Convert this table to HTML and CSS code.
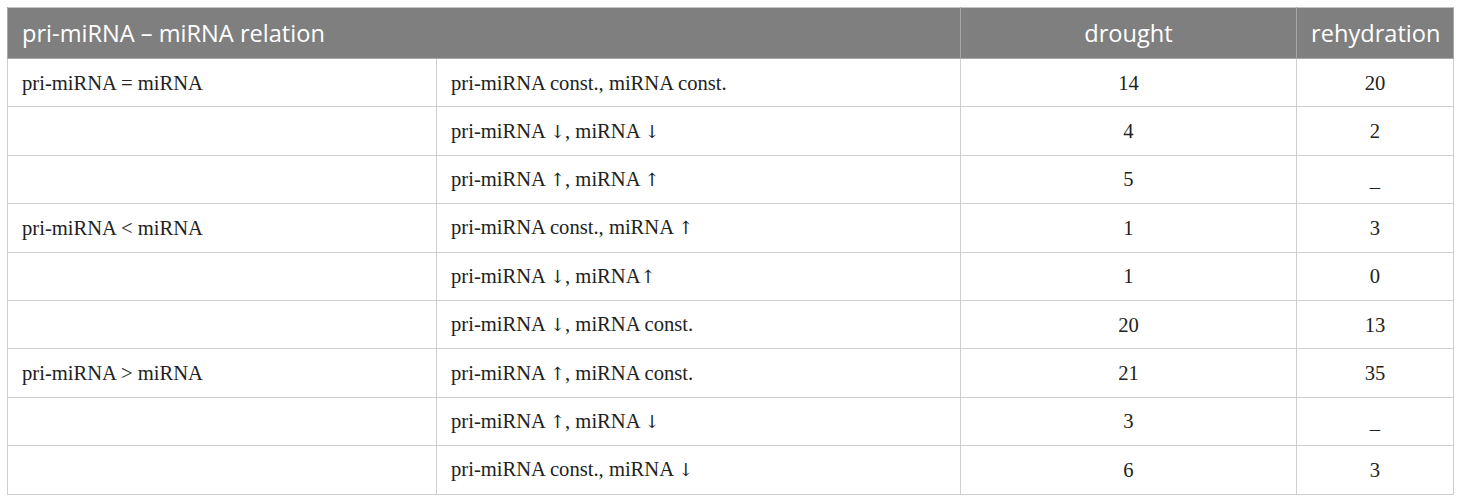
FILE: index.html
```html
<!DOCTYPE html>
<html>
<head>
<meta charset="utf-8">
<link rel="stylesheet" href="styles.css">
</head>
<body>
<div class="wrap">
<table class="data">
  <colgroup>
    <col class="c1"><col class="c2"><col class="c3"><col class="c4">
  </colgroup>
  <thead>
    <tr>
      <th colspan="2" class="left">pri-miRNA – miRNA relation</th>
      <th>drought</th>
      <th>rehydration</th>
    </tr>
  </thead>
  <tbody>
    <tr><td>pri-miRNA = miRNA</td><td>pri-miRNA const., miRNA const.</td><td class="num">14</td><td class="num">20</td></tr>
    <tr><td></td><td>pri-miRNA <span class="arr">↓</span>, miRNA <span class="arr">↓</span></td><td class="num">4</td><td class="num">2</td></tr>
    <tr><td></td><td>pri-miRNA <span class="arr">↑</span>, miRNA <span class="arr">↑</span></td><td class="num">5</td><td class="num"><span class="dash">–</span></td></tr>
    <tr><td>pri-miRNA &lt; miRNA</td><td>pri-miRNA const., miRNA <span class="arr">↑</span></td><td class="num">1</td><td class="num">3</td></tr>
    <tr><td></td><td>pri-miRNA <span class="arr">↓</span>, miRNA<span class="arr">↑</span></td><td class="num">1</td><td class="num">0</td></tr>
    <tr><td></td><td>pri-miRNA <span class="arr">↓</span>, miRNA const.</td><td class="num">20</td><td class="num">13</td></tr>
    <tr><td>pri-miRNA &gt; miRNA</td><td>pri-miRNA <span class="arr">↑</span>, miRNA const.</td><td class="num">21</td><td class="num">35</td></tr>
    <tr><td></td><td>pri-miRNA <span class="arr">↑</span>, miRNA <span class="arr">↓</span></td><td class="num">3</td><td class="num"><span class="dash">–</span></td></tr>
    <tr><td></td><td>pri-miRNA const., miRNA <span class="arr">↓</span></td><td class="num">6</td><td class="num">3</td></tr>
  </tbody>
</table>
</div>
</body>
</html>
```

FILE: styles.css
```css
html, body {
  margin: 0;
  padding: 0;
  background: #ffffff;
}
.wrap {
  padding: 7px;
}
.data {
  border-collapse: collapse;
  width: 1446px;
  table-layout: fixed;
  border: 1px solid #c4c4c4;
}
.c1 { width: 429px; }
.c2 { width: 524px; }
.c3 { width: 336px; }
.c4 { width: 157px; }
.data th {
  background: #7f7f7f;
  color: #ffffff;
  font-family: "Open Sans", "Liberation Sans", sans-serif;
  font-weight: 400;
  font-size: 23.6px;
  line-height: 26px;
  height: 51px;
  padding: 0 14px;
  text-align: center;
  border: 1px solid #a8a8a8;
  border-top: none;
  white-space: nowrap;
  box-sizing: border-box;
}
.data th.left {
  text-align: left;
}
.data td {
  font-family: "Liberation Serif", "Times New Roman", serif;
  font-size: 20.6px;
  line-height: 22px;
  color: #222222;
  height: 48.4px;
  padding: 0 14px;
  border: 1px solid #cfcfcf;
  text-align: left;
  vertical-align: middle;
  box-sizing: border-box;
}
.data td.num {
  text-align: center;
}
.arr {
  font-family: "DejaVu Serif", "Liberation Serif", serif;
  font-size: 18px;
  color: #222222;
}
.dash {
  position: relative;
  top: 8px;
}
```
